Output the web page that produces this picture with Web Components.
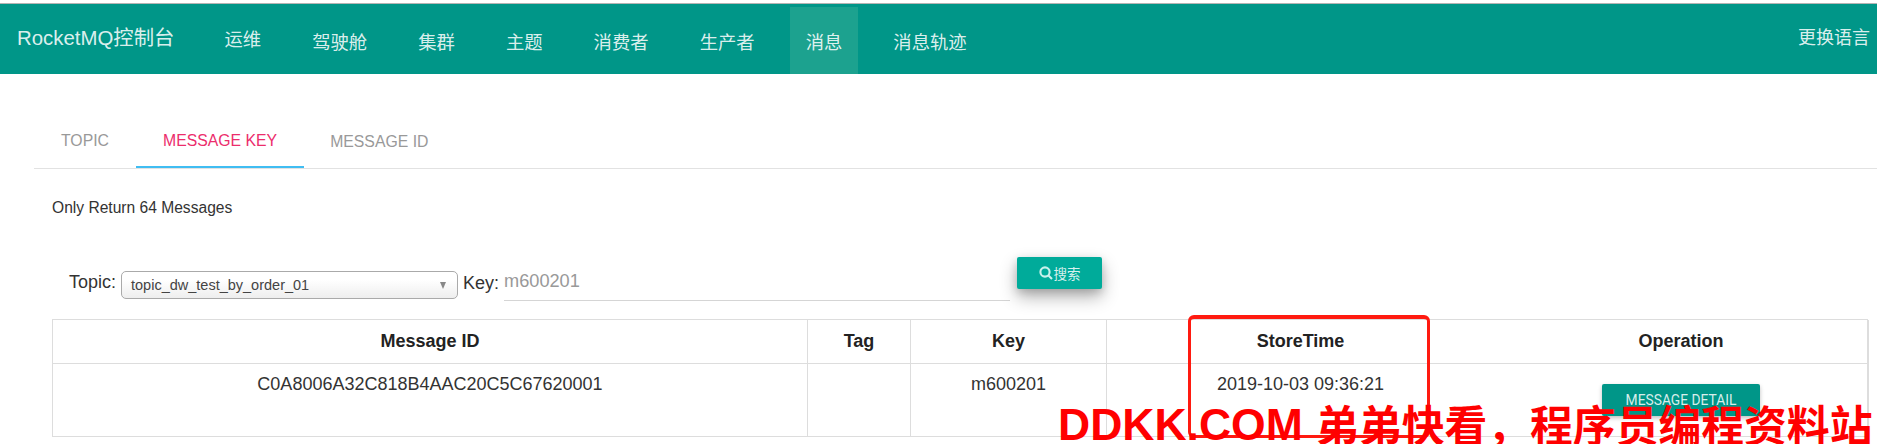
<!DOCTYPE html>
<html lang="zh"><head><meta charset="utf-8"><title>RocketMQ</title>
<style>
html,body{margin:0;padding:0;background:#fff;height:444px;overflow:hidden;}
body{font-family:"Liberation Sans","Noto Sans CJK SC",sans-serif;color:#333;position:relative;}
</style></head><body>
<mq-header></mq-header>
<mq-tabs></mq-tabs>
<mq-note>Only Return 64 Messages</mq-note>
<mq-search></mq-search>
<mq-table></mq-table>
<mq-overlay></mq-overlay>
<script>
const FONT='"Liberation Sans","Noto Sans CJK SC",sans-serif';
class Base extends HTMLElement{
  constructor(){super();this.attachShadow({mode:'open'}).innerHTML=this.constructor.html;}
}
class MqHeader extends Base{static html=`<style>
:host{display:flex;margin-top:3px;border-top:1px solid #b4b4b4;height:70px;background:#009688;color:rgba(255,255,255,.87);font-family:${FONT};box-sizing:content-box;}
.brand{font-size:20.4px;margin-left:17px;width:191.5px;padding-bottom:6px;display:flex;align-items:center;white-space:nowrap;height:64px;}
nav{display:flex;gap:19px;align-self:flex-end;height:67px;}
a{display:flex;align-items:center;padding:0 16px;font-size:18.35px;white-space:nowrap;}
a.up{padding-bottom:6px;}
a.on{background:#1ca28f;}
.lang{margin-left:auto;margin-right:7px;font-size:18px;display:flex;align-items:center;padding-bottom:6px;height:64px;white-space:nowrap;}
</style><div class="brand">RocketMQ控制台</div>
<nav><a class="up">运维</a><a>驾驶舱</a><a>集群</a><a>主题</a><a>消费者</a><a>生产者</a><a class="on">消息</a><a>消息轨迹</a></nav>
<div class="lang">更换语言</div>`}
class MqTabs extends Base{static html=`<style>
:host{display:flex;margin:40px 0 0 34px;height:55px;border-bottom:1px solid #e2e2e2;box-sizing:border-box;font-family:${FONT};font-size:15.8px;color:#999;}
a{display:flex;align-items:center;height:54px;padding:0 27px;box-sizing:border-box;white-space:nowrap;}
a.on{color:#ec2d6c;border-bottom:2px solid #40bdf2;padding:2px 27px 0;}
a:first-child,a:last-child{padding-top:2px}
a:last-child{margin-left:-1px}
</style><a>TOPIC</a><a class="on">MESSAGE KEY</a><a>MESSAGE ID</a>`}
class MqNote extends Base{static html=`<style>
:host{display:block;margin:29px 0 0 52px;height:20px;line-height:20px;font-size:15.6px;font-family:${FONT};color:#333;}
</style><slot></slot>`}
class MqSearch extends Base{static html=`<style>
:host{display:flex;align-items:flex-start;margin:39px 0 0 69px;height:44px;font-family:${FONT};font-size:18px;color:#333;white-space:nowrap;}
.l1{margin-top:15px;width:52px;line-height:20px;}
.sel{margin-top:14px;width:337px;height:28px;box-sizing:border-box;border:1px solid #aaa;border-radius:5px;background:linear-gradient(#fff 30%,#eee);display:flex;align-items:center;justify-content:space-between;padding:0 11px 0 9px;font-size:14.5px;color:#444;}
.sel i{width:0;height:0;border-left:3.5px solid transparent;border-right:3.5px solid transparent;border-top:7px solid #888;}
.l2{margin:16px 0 0 5px;width:41px;line-height:20px;}
.inp{margin-top:0;width:506px;height:44px;box-sizing:border-box;border-bottom:1px solid #d5d5d5;color:#999;font-size:18.2px;padding-top:14px;line-height:21px;}
button{all:unset;box-sizing:border-box;margin-left:7px;width:85px;height:32px;background:#00ab9a;border-radius:2px;color:rgba(255,255,255,.85);font-size:13.5px;display:flex;align-items:center;justify-content:center;box-shadow:0 8px 17px rgba(0,0,0,.3),0 3px 8px rgba(0,0,0,.15);font-family:${FONT};}
svg{display:block;margin-right:1px;}
</style><span class="l1">Topic:</span><div class="sel"><span>topic_dw_test_by_order_01</span><i></i></div><span class="l2">Key:</span><div class="inp">m600201</div>
<button><svg width="14" height="14" viewBox="0 0 14 14" fill="none" stroke="#c9f1ec" stroke-width="2.1"><circle cx="6" cy="6" r="4.6"/><path d="M9.2 9.2L13 13"/></svg>搜索</button>`}
class MqTable extends Base{static html=`<style>
:host{display:grid;grid-template-columns:755px 103px 196px 387px 375px;margin:18px 0 0 52px;width:1816px;height:118px;box-sizing:border-box;border:1px solid #ddd;font-family:${FONT};color:#333;}
.c{box-sizing:border-box;text-align:center;border-right:1px solid #ddd;font-size:18px;}
.c:nth-child(5n){border-right:0}
.h{height:44px;line-height:42px;font-weight:bold;font-size:18px;color:#222;border-bottom:1px solid #ddd;}
.d{padding-top:10px;line-height:20px;height:73px;}
button{all:unset;display:block;box-sizing:border-box;margin:10px auto 0;width:158px;height:32px;background:#009688;border-radius:2px;color:rgba(255,255,255,.85);font:13.8px/31px Roboto,sans-serif;text-align:center;box-shadow:0 2px 4px rgba(0,0,0,.25);}
</style>
<div class="c h">Message ID</div><div class="c h">Tag</div><div class="c h">Key</div><div class="c h">StoreTime</div><div class="c h">Operation</div>
<div class="c d">C0A8006A32C818B4AAC20C5C67620001</div><div class="c d"></div><div class="c d">m600201</div><div class="c d">2019-10-03 09:36:21</div><div class="c d"><button>MESSAGE DETAIL</button></div>`}
class MqOverlay extends Base{static html=`<style>
:host{display:block;}
.box{position:absolute;left:1188px;top:315px;width:242px;height:123px;box-sizing:border-box;border:3px solid #ff1a10;border-top-width:4px;border-radius:6px;}
.wm{position:absolute;left:1058px;top:398px;color:#ff0000;font:bold 44.5px/54px "Liberation Sans","Noto Sans CJK SC",sans-serif;white-space:nowrap;}
.wm span{font-size:42.8px;margin-left:1px;position:relative;top:2px;}
</style><div class="box"></div><div class="wm">DDKK.COM <span>弟弟快看，程序员编程资料站</span></div>`}
customElements.define('mq-header',MqHeader);
customElements.define('mq-tabs',MqTabs);
customElements.define('mq-note',MqNote);
customElements.define('mq-search',MqSearch);
customElements.define('mq-table',MqTable);
customElements.define('mq-overlay',MqOverlay);
</script>
</body></html>
